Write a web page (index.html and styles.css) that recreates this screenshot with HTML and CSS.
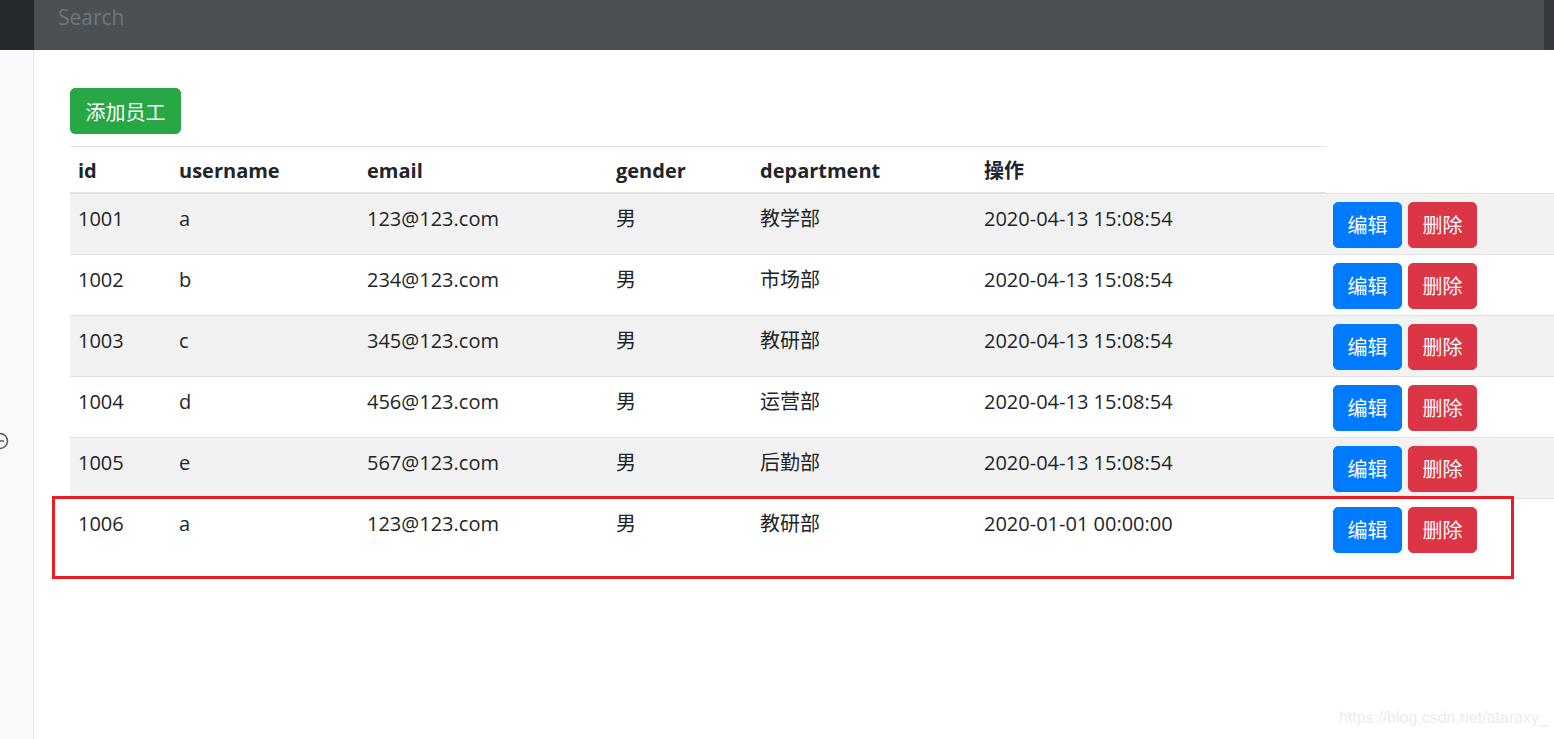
FILE: index.html
```html
<!DOCTYPE html>
<html lang="zh">
<head>
<meta charset="utf-8">
<title>员工列表</title>
<link rel="stylesheet" href="styles.css">
</head>
<body>
<header class="navbar">
  <div class="brand"></div>
  <div class="search"><span class="placeholder">Search</span></div>
</header>
<div class="layout">
  <aside class="sidebar">
    <svg class="side-icon" width="12" height="20" viewBox="0 0 12 20"><circle cx="0" cy="10" r="7.5" fill="none" stroke="#555" stroke-width="1.5"/><line x1="0" y1="10" x2="4" y2="10" stroke="#555" stroke-width="1.5"/></svg>
  </aside>
  <main class="main">
    <button class="btn btn-success">添加员工</button>
    <table class="table">
      <colgroup>
        <col class="c1"><col class="c2"><col class="c3"><col class="c4"><col class="c5"><col class="c6"><col class="c7">
      </colgroup>
      <thead>
        <tr><th>id</th><th>username</th><th>email</th><th>gender</th><th>department</th><th>操作</th></tr>
      </thead>
      <tbody>
        <tr class="odd"><td>1001</td><td>a</td><td>123@123.com</td><td>男</td><td>教学部</td><td>2020-04-13 15:08:54</td><td class="act"><span class="actions"><button class="btn btn-primary">编辑</button><button class="btn btn-danger">删除</button></span></td></tr>
        <tr><td>1002</td><td>b</td><td>234@123.com</td><td>男</td><td>市场部</td><td>2020-04-13 15:08:54</td><td class="act"><span class="actions"><button class="btn btn-primary">编辑</button><button class="btn btn-danger">删除</button></span></td></tr>
        <tr class="odd"><td>1003</td><td>c</td><td>345@123.com</td><td>男</td><td>教研部</td><td>2020-04-13 15:08:54</td><td class="act"><span class="actions"><button class="btn btn-primary">编辑</button><button class="btn btn-danger">删除</button></span></td></tr>
        <tr><td>1004</td><td>d</td><td>456@123.com</td><td>男</td><td>运营部</td><td>2020-04-13 15:08:54</td><td class="act"><span class="actions"><button class="btn btn-primary">编辑</button><button class="btn btn-danger">删除</button></span></td></tr>
        <tr class="odd"><td>1005</td><td>e</td><td>567@123.com</td><td>男</td><td>后勤部</td><td>2020-04-13 15:08:54</td><td class="act"><span class="actions"><button class="btn btn-primary">编辑</button><button class="btn btn-danger">删除</button></span></td></tr>
        <tr class="last"><td>1006</td><td>a</td><td>123@123.com</td><td>男</td><td>教研部</td><td>2020-01-01 00:00:00</td><td class="act"><span class="actions"><button class="btn btn-primary">编辑</button><button class="btn btn-danger">删除</button></span></td></tr>
      </tbody>
    </table>
  </main>
</div>
<div class="highlight"></div>
<div class="watermark">https://blog.csdn.net/ataraxy_</div>
</body>
</html>
```
FILE: styles.css
```css
html, body {
  margin: 0;
  padding: 0;
  height: 100%;
  overflow: hidden;
  background: #fff;
}
body {
  font-family: "Open Sans", "Noto Sans CJK SC", sans-serif;
  font-size: 20px;
  color: #212529;
  position: relative;
}
.navbar {
  display: flex;
  height: 50px;
  background: #343a40;
  padding-right: 10px;
}
.brand {
  width: 34px;
  background: #25292d;
}
.search {
  flex: 1;
  background: #4b5055;
  padding-left: 24px;
}
.placeholder {
  display: block;
  line-height: 34px;
  color: #6f767c;
  font-size: 21px;
}
.layout {
  display: flex;
  height: 689px;
}
.sidebar {
  width: 33px;
  background: #f8f9fa;
  border-right: 1px solid #e8e9ea;
  position: relative;
  flex: none;
}
.side-icon {
  position: absolute;
  left: 0;
  top: 381px;
}
.main {
  flex: 1;
  min-width: 0;
  overflow: hidden;
  padding: 38px 0 0 36px;
}
.btn {
  display: inline-block;
  font-family: "Noto Sans CJK SC", "Open Sans", sans-serif;
  font-size: 20px;
  line-height: 30px;
  height: 46px;
  padding: 7px 13.5px;
  border: 1px solid transparent;
  border-radius: 5px;
  color: #fff;
  box-sizing: border-box;
  cursor: pointer;
  margin: 0;
}
.btn-success {
  background: #28a745;
  border-color: #28a745;
  padding: 8px 14.5px 6px;
}
.btn-primary {
  background: #007bff;
  border-color: #007bff;
}
.btn-danger {
  background: #dc3545;
  border-color: #dc3545;
}
.actions {
  display: flex;
  gap: 6px;
}
.table {
  margin-top: 12px;
  border-collapse: collapse;
  table-layout: fixed;
  width: 1556px;
}
.c1 { width: 101px; }
.c2 { width: 188px; }
.c3 { width: 249px; }
.c4 { width: 144px; }
.c5 { width: 224px; }
.c6 { width: 350px; }
.c7 { width: 300px; }
th, td {
  text-align: left;
  vertical-align: top;
  padding: 10px 8px 6px 8px;
  line-height: 30px;
  white-space: nowrap;
}
th {
  font-weight: 700;
  border-top: 1px solid #dee2e6;
  border-bottom: 2px solid #dee2e6;
  padding-top: 9px;
  padding-bottom: 6px;
}
td {
  border-top: 1px solid #dee2e6;
}
td.act {
  padding: 8px 8px 6px 7px;
}
tr.odd td {
  background: #f2f2f2;
}
.highlight {
  position: absolute;
  left: 52px;
  top: 496px;
  width: 1462px;
  height: 83px;
  box-sizing: border-box;
  border: 3px solid #ea1c24;
  pointer-events: none;
}
.watermark {
  position: absolute;
  left: 1339px;
  top: 709px;
  font-family: "Liberation Sans", Arial, sans-serif;
  font-size: 16px;
  color: #ececec;
  white-space: nowrap;
}
```
